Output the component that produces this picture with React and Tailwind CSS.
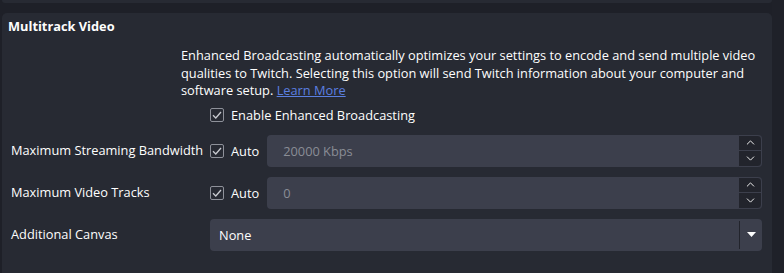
import { ChevronUp, ChevronDown } from 'lucide-react';

function CheckBox({ label }) {
    return (
        <label className="flex items-center gap-[7px] text-[#fefefe]">
            <span className="flex h-[14px] w-[14px] items-center justify-center rounded-[2px] border border-[#8e919a] bg-[#272a33]">
                <svg width="10" height="8" viewBox="0 0 10 8" fill="none">
                    <path d="M1 4.2 L3.8 7 L9 1" stroke="#c9cbd1" strokeWidth="1.3" />
                </svg>
            </span>
            <span>{label}</span>
        </label>
    );
}

function SpinBox({ value }) {
    return (
        <div className="flex h-[32px] flex-1 rounded-[4px] bg-[#3c3f4c]">
            <div className="flex flex-1 items-center pl-[16px] text-[#8a8d96]">{value}</div>
            <div className="flex w-[24px] flex-col rounded-r-[4px] border border-[#3c3f4c] bg-[#22242c]">
                <div className="flex flex-1 items-center justify-center border-b border-[#3c3f4c]">
                    <ChevronUp size={13} strokeWidth={1.8} color="#f2f2f2" />
                </div>
                <div className="flex flex-1 items-center justify-center">
                    <ChevronDown size={13} strokeWidth={1.8} color="#f2f2f2" />
                </div>
            </div>
        </div>
    );
}

export default function App() {
    return (
        <div
            className="flex h-[273px] w-[784px] overflow-hidden bg-[#1e2028] text-[12.8px] leading-[18px] text-[#fefefe]"
            style={{ fontFamily: '"Open Sans", "Noto Sans", sans-serif' }}
        >
            <div className="flex w-[772px] flex-col pl-[2px]">
                <div className="h-[3px] rounded-b-[4px] bg-[#272a33]" />

                <div className="mt-[10px] flex-1 rounded-t-[5px] bg-[#272a33] pr-[10px]">
                    <h2 className="pl-[6px] pt-[4px] font-bold">Multitrack Video</h2>

                    <p className="ml-[179px] mt-[12px] w-[586px] leading-[17.5px]">
                        Enhanced Broadcasting automatically optimizes your settings to encode and send multiple video
                        qualities to Twitch. Selecting this option will send Twitch information about your computer and
                        software setup. <span className="text-[#5b7fe0] underline">Learn More</span>
                    </p>

                    <div className="ml-[208px] mt-[6px]">
                        <CheckBox label="Enable Enhanced Broadcasting" />
                    </div>

                    <div className="mt-[11px] grid grid-cols-[208px_1fr] gap-y-[10px]">
                        <div className="flex items-center pl-[9px] pb-[2px]">Maximum Streaming Bandwidth</div>
                        <div className="flex items-center gap-[8px]">
                            <CheckBox label="Auto" />
                            <SpinBox value="20000 Kbps" />
                        </div>

                        <div className="flex items-center pl-[9px] pb-[2px]">Maximum Video Tracks</div>
                        <div className="flex items-center gap-[8px]">
                            <CheckBox label="Auto" />
                            <SpinBox value="0" />
                        </div>

                        <div className="flex items-center pl-[9px] pb-[2px]">Additional Canvas</div>
                        <div className="flex h-[32px] rounded-[4px] bg-[#3c3f4c]">
                            <div className="flex flex-1 items-center pl-[9px]">None</div>
                            <div className="my-[2px] w-px bg-[#22242c]" />
                            <div className="flex w-[22px] items-center justify-center">
                                <svg width="9" height="5" viewBox="0 0 9 5">
                                    <path d="M0 0 H9 L4.5 5 Z" fill="#fefefe" />
                                </svg>
                            </div>
                        </div>
                    </div>
                </div>
            </div>
            <div className="flex-1 bg-[#1f2129]" />
        </div>
    );
}
